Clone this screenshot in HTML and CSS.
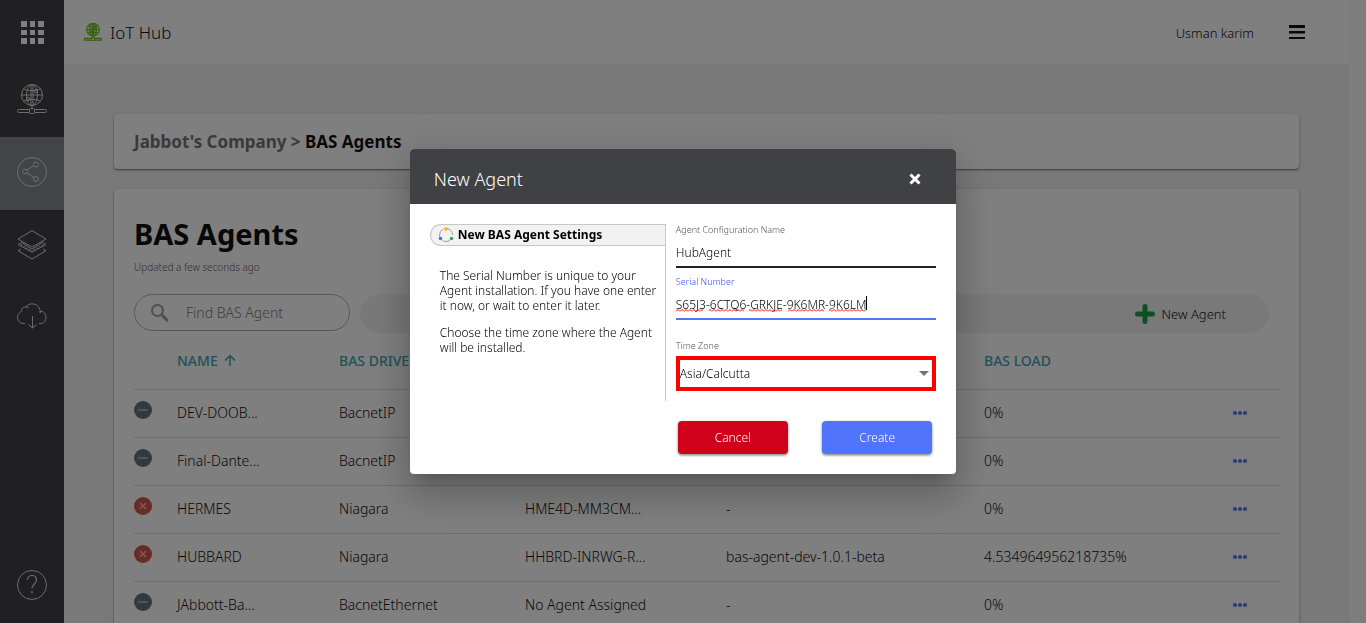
FILE: index.html
```html
<!DOCTYPE html>
<html lang="en">
<head>
<meta charset="utf-8">
<title>IoT Hub</title>
<link rel="stylesheet" href="styles.css">
</head>
<body>
<svg class="defs" aria-hidden="true">
  <symbol id="globe" viewBox="0 0 30 30"><g fill="none" stroke="currentColor"><circle cx="15" cy="11" r="10.5"/><ellipse cx="15" cy="11" rx="5.5" ry="10.5"/><path d="M14 .5v21M16 .5v21M4.5 11h21M6.500 5q8.500 3.500 17 0M6.500 17q8.500-3.500 17 0M15 21v3.500M12.500 28.500H1.500q-1 0-1-1v-1q0-1 1-1h11M17.500 28.500h11q1 0 1-1v-1q0-1-1-1h-11"/><rect x="12.500" y="24.500" width="5" height="5" rx="1"/><circle cx="19" cy="7" r="1.700"/><circle cx="11" cy="15" r="1.700"/></g></symbol>
  <symbol id="minus" viewBox="0 0 18 18"><circle cx="9" cy="9" r="9" fill="#67737c"/><path d="M4 9h10" stroke="#b4bcc2" stroke-width="1.500"/></symbol>
  <symbol id="cross" viewBox="0 0 18 18"><circle cx="9" cy="9" r="9" fill="#d5564c"/><path d="M6 6l6 6M12 6l-6 6" stroke="#f0c6c2" stroke-width="1.200"/></symbol>
  <symbol id="dots" viewBox="0 0 14 4"><g fill="currentColor"><circle cx="2" cy="2" r="2"/><circle cx="7" cy="2" r="2"/><circle cx="12" cy="2" r="2"/></g></symbol>
</svg>

<nav class="sidebar" aria-label="Main">
  <a class="side-item side-apps" href="#" aria-label="Apps"><svg width="24" height="24" fill="currentColor"><path d="M1 1h6v6H1zM10 1h5v6h-5zM18 1h6v6h-6zM1 10h6v5H1zM10 10h5v5h-5zM18 10h6v5h-6zM1 18h6v6H1zM10 18h5v6h-5zM18 18h6v6h-6z"/></svg></a>
  <a class="side-item" href="#" aria-label="Hub"><svg width="30" height="30"><use href="#globe"/></svg></a>
  <a class="side-item side-active" href="#" aria-label="Agents"><svg width="30" height="30" fill="none" stroke="currentColor"><circle cx="15" cy="15" r="14.500"/><circle cx="8" cy="14.500" r="2.500"/><circle cx="19" cy="7.500" r="2.500"/><circle cx="19" cy="22" r="2.500"/><path d="M10 13l7-4.500M10 16l7 4.500"/></svg></a>
  <a class="side-item" href="#" aria-label="Layers"><svg width="30" height="30" fill="none" stroke="currentColor"><path d="M15 .7L29 9 15 17 1 9zM4 13l-3 1.500L15 22l14-7.500-3-1.500M4 12l11 7 11-7M4 19l-3 1.700 14 8.300 14-8.300-3-1.700"/><path d="M4 15l11 6 11-6" stroke-dasharray="1 2" stroke-width="2"/></svg></a>
  <a class="side-item" href="#" aria-label="Downloads"><svg width="30" height="30" fill="none" stroke="currentColor"><path d="M8 20.500H6C2.500 20 .5 17.500.5 14.500.5 12 2 9.500 4.500 8.500 4 4 10 2 12 5.500M8.500 5C10 1 14 .5 17 1c4 1 6 4 6.500 8.500C20 9 25.500 7 27.500 10c3 4 1.500 10-3.500 10.500h-2M15.500 13v12M11.500 21.500l4 3.500 4-3.500"/></svg></a>
  <a class="side-item side-help" href="#" aria-label="Help"><svg width="30" height="30" fill="none" stroke="currentColor"><circle cx="15" cy="15" r="14.500"/><path d="M10.500 10c0-6 9-6 9 0 0 4-4.500 4-4.500 8.500M15 21v2.500" stroke-width="1.200"/></svg></a>
</nav>

<div class="page">
  <header class="topbar">
    <svg class="logo" width="18" height="18"><use href="#globe"/></svg>
    <span class="product">IoT Hub</span>
    <span class="user">Usman karim</span>
    <button class="menu" aria-label="Menu"><svg width="16" height="16" fill="currentColor"><path d="M0 1h16v3H0zM0 7h16v2.500H0zM0 13h16v2H0z"/></svg></button>
  </header>
  <main class="content">
    <div class="card crumbs"><a href="#">Jabbot's Company</a> <span class="sep">&gt;</span> BAS Agents</div>
    <section class="card agents">
      <h1>BAS Agents</h1>
      <p class="updated">Updated a few seconds ago</p>
      <div class="tools">
        <label class="search"><svg width="18" height="18" fill="none" stroke="currentColor" stroke-width="2"><circle cx="6.500" cy="6.500" r="5.500"/><path d="M11 11l6 6" stroke-width="3"/></svg><input type="text" placeholder="Find BAS Agent" aria-label="Find BAS Agent"></label>
        <div class="actions"><button class="new-agent"><svg width="20" height="20" stroke="#219e48" stroke-width="5" stroke-linecap="round"><path d="M10 2.500v15M2.500 10h15"/></svg>New Agent</button></div>
      </div>
      <table>
        <colgroup><col class="c-state"><col class="c-name"><col class="c-driver"><col class="c-serial"><col class="c-version"><col><col class="c-more"></colgroup>
        <thead><tr><th></th><th>NAME <svg width="12" height="12" fill="none" stroke="currentColor" stroke-width="1.500"><path d="M6 12V1.500M1 6.500l5-5 5 5"/></svg></th><th>BAS DRIVER</th><th></th><th></th><th>BAS LOAD</th><th></th></tr></thead>
        <tbody>
          <tr><td><svg class="state"><use href="#minus"/></svg></td><td>DEV-DOOB...</td><td>BacnetIP</td><td></td><td></td><td>0%</td><td><button class="more" aria-label="More"><svg width="14" height="4"><use href="#dots"/></svg></button></td></tr>
          <tr><td><svg class="state"><use href="#minus"/></svg></td><td>Final-Dante...</td><td>BacnetIP</td><td></td><td></td><td>0%</td><td><button class="more" aria-label="More"><svg width="14" height="4"><use href="#dots"/></svg></button></td></tr>
          <tr><td><svg class="state"><use href="#cross"/></svg></td><td>HERMES</td><td>Niagara</td><td>HME4D-MM3CM...</td><td>-</td><td>0%</td><td><button class="more" aria-label="More"><svg width="14" height="4"><use href="#dots"/></svg></button></td></tr>
          <tr><td><svg class="state"><use href="#cross"/></svg></td><td>HUBBARD</td><td>Niagara</td><td>HHBRD-INRWG-R...</td><td>bas-agent-dev-1.0.1-beta</td><td>4.534964956218735%</td><td><button class="more" aria-label="More"><svg width="14" height="4"><use href="#dots"/></svg></button></td></tr>
          <tr><td><svg class="state"><use href="#minus"/></svg></td><td>JAbbott-Ba...</td><td>BacnetEthernet</td><td>No Agent Assigned</td><td>-</td><td>0%</td><td><button class="more" aria-label="More"><svg width="14" height="4"><use href="#dots"/></svg></button></td></tr>
        </tbody>
      </table>
    </section>
  </main>
</div>
<div class="gutter"></div>

<div class="scrim">
  <div class="dialog" role="dialog" aria-modal="true" aria-labelledby="dialog-title">
    <header class="dialog-head"><h2 id="dialog-title">New Agent</h2><button class="close" aria-label="Close"><svg width="12" height="12" stroke="currentColor" stroke-width="3"><path d="M1.500 1.500l9 9M10.500 1.500l-9 9"/></svg></button></header>
    <form class="dialog-body">
      <div class="info">
        <h3><svg width="16" height="16" fill="none"><circle cx="8" cy="8" r="6.500" stroke="#9aa0a6" stroke-dasharray="9.600 4" stroke-dashoffset="-4"/><circle cx="8" cy="2" r="1.800" fill="#f9b115"/><circle cx="2.500" cy="11.500" r="1.800" fill="#5571c4"/><circle cx="13.500" cy="11.500" r="1.800" fill="#34a853"/></svg>New BAS Agent Settings</h3>
        <p>The Serial Number is unique to your Agent installation. If you have one enter it now, or wait to enter it later.</p>
        <p>Choose the time zone where the Agent will be installed.</p>
      </div>
      <div class="fields">
        <label for="name">Agent Configuration Name</label>
        <div class="field"><input id="name" type="text" value="HubAgent"></div>
        <label class="focus" for="serial">Serial Number</label>
        <div class="field focus"><input id="serial" type="text" value="S65J3-6CTQ6-GRKJE-9K6MR-9K6LM" spellcheck="false">
          <svg class="marks" width="192" height="17" aria-hidden="true"><defs><pattern id="wave" width="4" height="3" y="13" patternUnits="userSpaceOnUse"><path d="M0 2.500L2 .5l2 2" fill="none" stroke="#f00"/></pattern></defs><path fill="url(#wave)" d="M0 13h27v3H0zM33 13h35v3H33zM73 13h33v3H73zM112 13h36v3h-36zM153 13h37v3h-37z"/><path d="M190 0h1v14h-1z" fill="#000"/></svg></div>
        <label class="zone-label" for="zone">Time Zone</label>
        <div class="zone"><select id="zone"><option>Asia/Calcutta</option></select><svg width="10" height="5" fill="#757575"><path d="M0 0h10L5 5z"/></svg></div>
      </div>
      <div class="buttons"><button type="button" class="btn cancel">Cancel</button><button type="button" class="btn create">Create</button></div>
    </form>
  </div>
</div>
</body>
</html>
```
FILE: styles.css
```css
* { box-sizing: border-box; }
body { margin: 0; height: 100vh; display: flex; overflow: hidden; font: 300 14px/20px "Noto Sans", "Open Sans", sans-serif; color: #111; background: #f2f2f2; }
button, input, select { font: inherit; color: inherit; background: none; border: 0; padding: 0; margin: 0; outline: 0; }
button { cursor: pointer; }
svg { display: block; flex: none; }
a { color: inherit; text-decoration: none; }
h1, h2, h3, p { margin: 0; }
.defs { position: absolute; width: 0; height: 0; }

.sidebar { width: 64px; flex: none; display: flex; flex-direction: column; background: #404145; color: #d8d8d8; }
.side-item { height: 73px; flex: none; display: flex; align-items: center; justify-content: center; padding-bottom: 3px; }
.side-apps { height: 64px; padding: 0; color: #fff; }
.side-active { background: #86888f; color: #dcdcdc; }
.side-help { margin-top: auto; height: 76px; padding: 0; }

.page { flex: 1; min-width: 0; }
.gutter { width: 17px; flex: none; background: #fafafa; }
.topbar { height: 64px; display: flex; align-items: center; padding: 0 44px 0 20px; background: #fff; }
.logo { color: #6cc024; stroke-width: 2; }
.product { margin: 2px 0 0 8px; font-size: 17px; }
.user { margin: 2px 35px 0 auto; font-size: 13px; }
.content { padding: 50px; display: grid; gap: 20px; }
.card { background: #fff; border-radius: 4px; box-shadow: 0 1px 3px rgba(0,0,0,.3), 0 1px 1px rgba(0,0,0,.3); padding: 0 20px; }
.crumbs { height: 55px; line-height: 56px; font-size: 17px; font-weight: 700; }
.crumbs a, .sep { color: #757575; }
.agents { padding-top: 24px; }
h1 { font-size: 29px; line-height: 42px; font-weight: 700; }
.updated { margin-top: 5px; font-size: 10px; line-height: 14px; color: #616161; }
.tools { display: flex; gap: 10px; margin: 20px 10px 0 0; }
.search { width: 216px; height: 37px; display: flex; align-items: center; border: 1px solid #b0b0b0; border-radius: 19px; padding: 0 16px; gap: 17px; color: #9e9e9e; }
.search input { width: 100%; min-width: 0; }
.search input::placeholder { color: #808080; opacity: 1; }
.actions { flex: 1; height: 39px; display: flex; justify-content: flex-end; padding-right: 43px; border-radius: 20px; background: #f2f2f2; }
.new-agent { display: flex; align-items: center; gap: 7px; font-size: 13px; }

table { width: 100%; table-layout: fixed; border-collapse: collapse; }
th, td { height: 48px; padding: 0; text-align: left; border-bottom: 1px solid #dcdcdc; white-space: nowrap; }
th { height: 56px; font-weight: 500; color: #40a4b0; }
th svg { display: inline-block; margin-left: 3px; }
.c-state { width: 43px; } .c-name { width: 162px; } .c-driver { width: 186px; } .c-serial { width: 201px; } .c-version { width: 258px; } .c-more { width: 46px; }
.state { width: 18px; height: 18px; margin-bottom: 6px; }
.more { display: block; color: #4d6ef5; }

.scrim { position: fixed; inset: 0; display: flex; align-items: center; justify-content: center; background: rgba(0,0,0,.5); }
.dialog { width: 40%; min-width: 520px; border-radius: 4px; overflow: hidden; background: #fff; color: #000; box-shadow: 0 11px 15px -7px rgba(0,0,0,.2), 0 24px 38px 3px rgba(0,0,0,.14), 0 9px 46px 8px rgba(0,0,0,.12); }
.dialog-head { height: 55px; display: flex; align-items: center; justify-content: space-between; padding: 4px 35px 0 24px; background: #404145; color: #fff; }
.dialog-head h2 { font-size: 18px; line-height: 24px; font-weight: 300; }
.dialog-body { display: grid; grid-template-columns: 236px 1fr; column-gap: 10px; padding: 20px; font-size: 12px; line-height: 15px; }
.info { height: 177px; border-right: 1px solid #c8c8c8; }
.info h3 { height: 22px; display: flex; align-items: center; gap: 4px; margin-bottom: 22px; padding-left: 7px; border: 1px solid #c8c8c8; border-right: 0; border-radius: 11px 0 0 11px; background: #f2f2f2; font-size: 12px; line-height: 20px; font-weight: 700; }
.info p { margin: 0 2px 12px 10px; }
.fields label { display: block; height: 12px; font-size: 9px; line-height: 12px; color: #555; }
.fields label.focus { margin-top: 8px; color: #3557ee; }
.field { position: relative; height: 33px; border-bottom: 2px solid #212121; }
.field.focus { border-color: #5074f5; }
.field input { display: block; width: 100%; height: 34px; line-height: 16px; }
.field input { margin-top: -1px; }
.marks { position: absolute; left: 0; top: 9px; }
.fields .zone-label { margin-top: 20px; }
.zone { height: 35px; display: flex; align-items: center; margin-top: 4px; padding-right: 3px; border: 4px solid #f00; }
.zone select { flex: 1; appearance: none; height: 27px; }
.buttons { grid-column: 2; display: flex; justify-content: space-between; margin-top: 20px; padding: 0 4px 0 2px; }
.btn { width: 110px; height: 33px; border-radius: 4px; color: #fff; font-size: 12px; box-shadow: 0 1px 3px rgba(0,0,0,.4), 0 2px 2px rgba(0,0,0,.15); }
.cancel { background: #d0021b; }
.create { background: #5074fb; }
```
